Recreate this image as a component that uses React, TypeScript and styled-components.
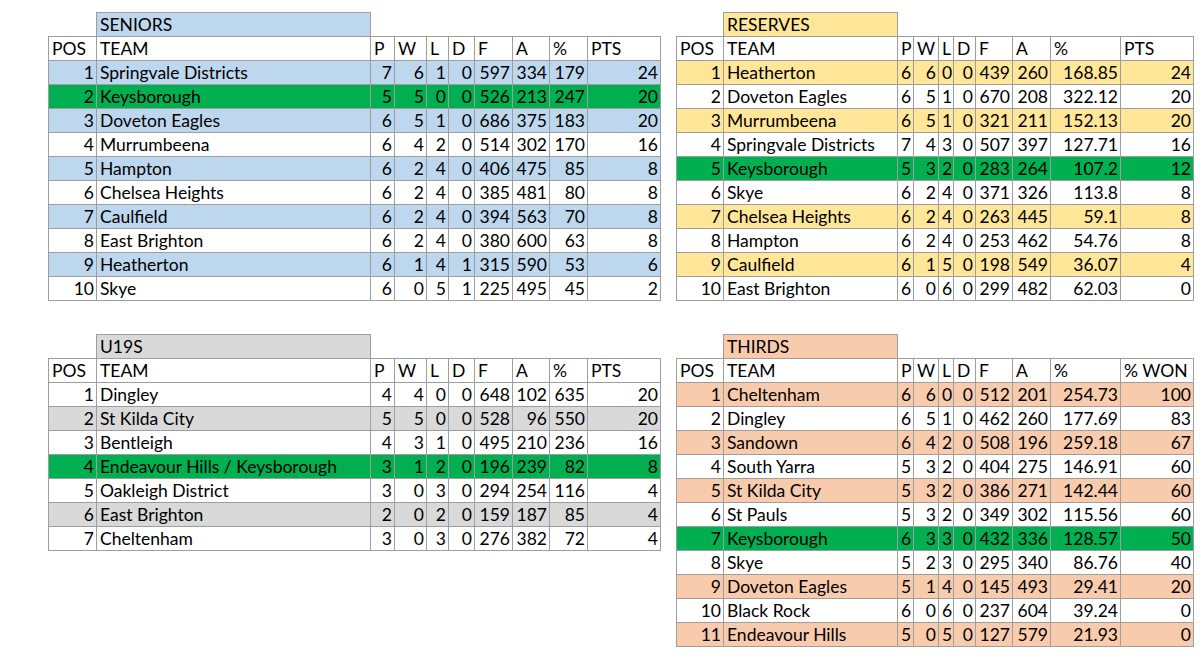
import React from "react";
import styled, { createGlobalStyle } from "styled-components";

const GlobalStyle = createGlobalStyle`
  html, body {
    margin: 0;
    padding: 0;
    background: #ffffff;
  }
  body {
    font-family: Lato, "Open Sans", sans-serif;
    color: #000000;
  }
`;

const GREEN = "#00b050";
const LINE = "#9e9e9e";

const Sheet = styled.div`
  display: grid;
  grid-template-columns: 612px 517px;
  column-gap: 16px;
  row-gap: 33px;
  align-items: start;
  padding: 12px 0 0 48px;
`;

const Table = styled.table<{ $width: number }>`
  border-collapse: collapse;
  table-layout: fixed;
  width: ${({ $width }) => $width}px;
  font-size: 17.5px;
`;

const TitleRow = styled.tr`
  height: 24px;
`;

const Blank = styled.td`
  border: none;
  padding: 0;
`;

const TitleCell = styled.td<{ $bg: string }>`
  background: ${({ $bg }) => $bg};
  border: 1px solid ${LINE};
  padding: 0 3px;
  white-space: nowrap;
  text-align: left;
`;

const Row = styled.tr<{ $bg: string }>`
  height: 24px;
  background: ${({ $bg }) => $bg};
`;

const HeadCell = styled.td`
  border: 1px solid ${LINE};
  padding: 0 3px;
  text-align: left;
  white-space: nowrap;
  overflow: hidden;
`;

const Cell = styled.td<{ $left?: boolean }>`
  border: 1px solid ${LINE};
  padding: 0 2px 0 3px;
  text-align: ${({ $left }) => ($left ? "left" : "right")};
  white-space: nowrap;
  overflow: hidden;
`;

type Standing = {
  title: string;
  color: string;
  cols: number[];
  last: string;
  oddColored: boolean;
  green: number;
  rows: string[];
};

const WIDE = [48, 274, 24, 32, 22, 26, 38, 37, 38, 73];
const NARROW = [47, 174, 16, 25, 15, 22, 37, 38, 70, 73];

const tables: Standing[] = [
  {
    title: "SENIORS",
    color: "#bdd7ee",
    cols: WIDE,
    last: "PTS",
    oddColored: true,
    green: 2,
    rows: [
      "Springvale Districts|7|6|1|0|597|334|179|24",
      "Keysborough|5|5|0|0|526|213|247|20",
      "Doveton Eagles|6|5|1|0|686|375|183|20",
      "Murrumbeena|6|4|2|0|514|302|170|16",
      "Hampton|6|2|4|0|406|475|85|8",
      "Chelsea Heights|6|2|4|0|385|481|80|8",
      "Caulfield|6|2|4|0|394|563|70|8",
      "East Brighton|6|2|4|0|380|600|63|8",
      "Heatherton|6|1|4|1|315|590|53|6",
      "Skye|6|0|5|1|225|495|45|2",
    ],
  },
  {
    title: "RESERVES",
    color: "#ffe699",
    cols: NARROW,
    last: "PTS",
    oddColored: true,
    green: 5,
    rows: [
      "Heatherton|6|6|0|0|439|260|168.85|24",
      "Doveton Eagles|6|5|1|0|670|208|322.12|20",
      "Murrumbeena|6|5|1|0|321|211|152.13|20",
      "Springvale Districts|7|4|3|0|507|397|127.71|16",
      "Keysborough|5|3|2|0|283|264|107.2|12",
      "Skye|6|2|4|0|371|326|113.8|8",
      "Chelsea Heights|6|2|4|0|263|445|59.1|8",
      "Hampton|6|2|4|0|253|462|54.76|8",
      "Caulfield|6|1|5|0|198|549|36.07|4",
      "East Brighton|6|0|6|0|299|482|62.03|0",
    ],
  },
  {
    title: "U19S",
    color: "#d9d9d9",
    cols: WIDE,
    last: "PTS",
    oddColored: false,
    green: 4,
    rows: [
      "Dingley|4|4|0|0|648|102|635|20",
      "St Kilda City|5|5|0|0|528|96|550|20",
      "Bentleigh|4|3|1|0|495|210|236|16",
      "Endeavour Hills / Keysborough|3|1|2|0|196|239|82|8",
      "Oakleigh District|3|0|3|0|294|254|116|4",
      "East Brighton|2|0|2|0|159|187|85|4",
      "Cheltenham|3|0|3|0|276|382|72|4",
    ],
  },
  {
    title: "THIRDS",
    color: "#f8cbad",
    cols: NARROW,
    last: "% WON",
    oddColored: true,
    green: 7,
    rows: [
      "Cheltenham|6|6|0|0|512|201|254.73|100",
      "Dingley|6|5|1|0|462|260|177.69|83",
      "Sandown|6|4|2|0|508|196|259.18|67",
      "South Yarra|5|3|2|0|404|275|146.91|60",
      "St Kilda City|5|3|2|0|386|271|142.44|60",
      "St Pauls|5|3|2|0|349|302|115.56|60",
      "Keysborough|6|3|3|0|432|336|128.57|50",
      "Skye|5|2|3|0|295|340|86.76|40",
      "Doveton Eagles|5|1|4|0|145|493|29.41|20",
      "Black Rock|6|0|6|0|237|604|39.24|0",
      "Endeavour Hills|5|0|5|0|127|579|21.93|0",
    ],
  },
];

const HEAD = ["POS", "TEAM", "P", "W", "L", "D", "F", "A", "%"];

function rowColour(t: Standing, pos: number) {
  if (pos === t.green) return GREEN;
  const odd = pos % 2 === 1;
  return odd === t.oddColored ? t.color : "#ffffff";
}

function LadderTable({ t }: { t: Standing }) {
  const width = t.cols.reduce((a, b) => a + b, 0);
  return (
    <Table $width={width}>
      <colgroup>
        {t.cols.map((w, i) => (
          <col key={i} style={{ width: w }} />
        ))}
      </colgroup>
      <tbody>
        <TitleRow>
          <Blank />
          <TitleCell $bg={t.color}>{t.title}</TitleCell>
          <Blank colSpan={8} />
        </TitleRow>
        <Row $bg="#ffffff">
          {[...HEAD, t.last].map((h) => (
            <HeadCell key={h}>{h}</HeadCell>
          ))}
        </Row>
        {t.rows.map((line, i) => {
          const [team, ...nums] = line.split("|");
          const pos = i + 1;
          return (
            <Row key={pos} $bg={rowColour(t, pos)}>
              <Cell>{pos}</Cell>
              <Cell $left>{team}</Cell>
              {nums.map((n, j) => (
                <Cell key={j}>{n}</Cell>
              ))}
            </Row>
          );
        })}
      </tbody>
    </Table>
  );
}

export default function App() {
  return (
    <>
      <GlobalStyle />
      <Sheet>
        {tables.map((t) => (
          <LadderTable key={t.title} t={t} />
        ))}
      </Sheet>
    </>
  );
}
